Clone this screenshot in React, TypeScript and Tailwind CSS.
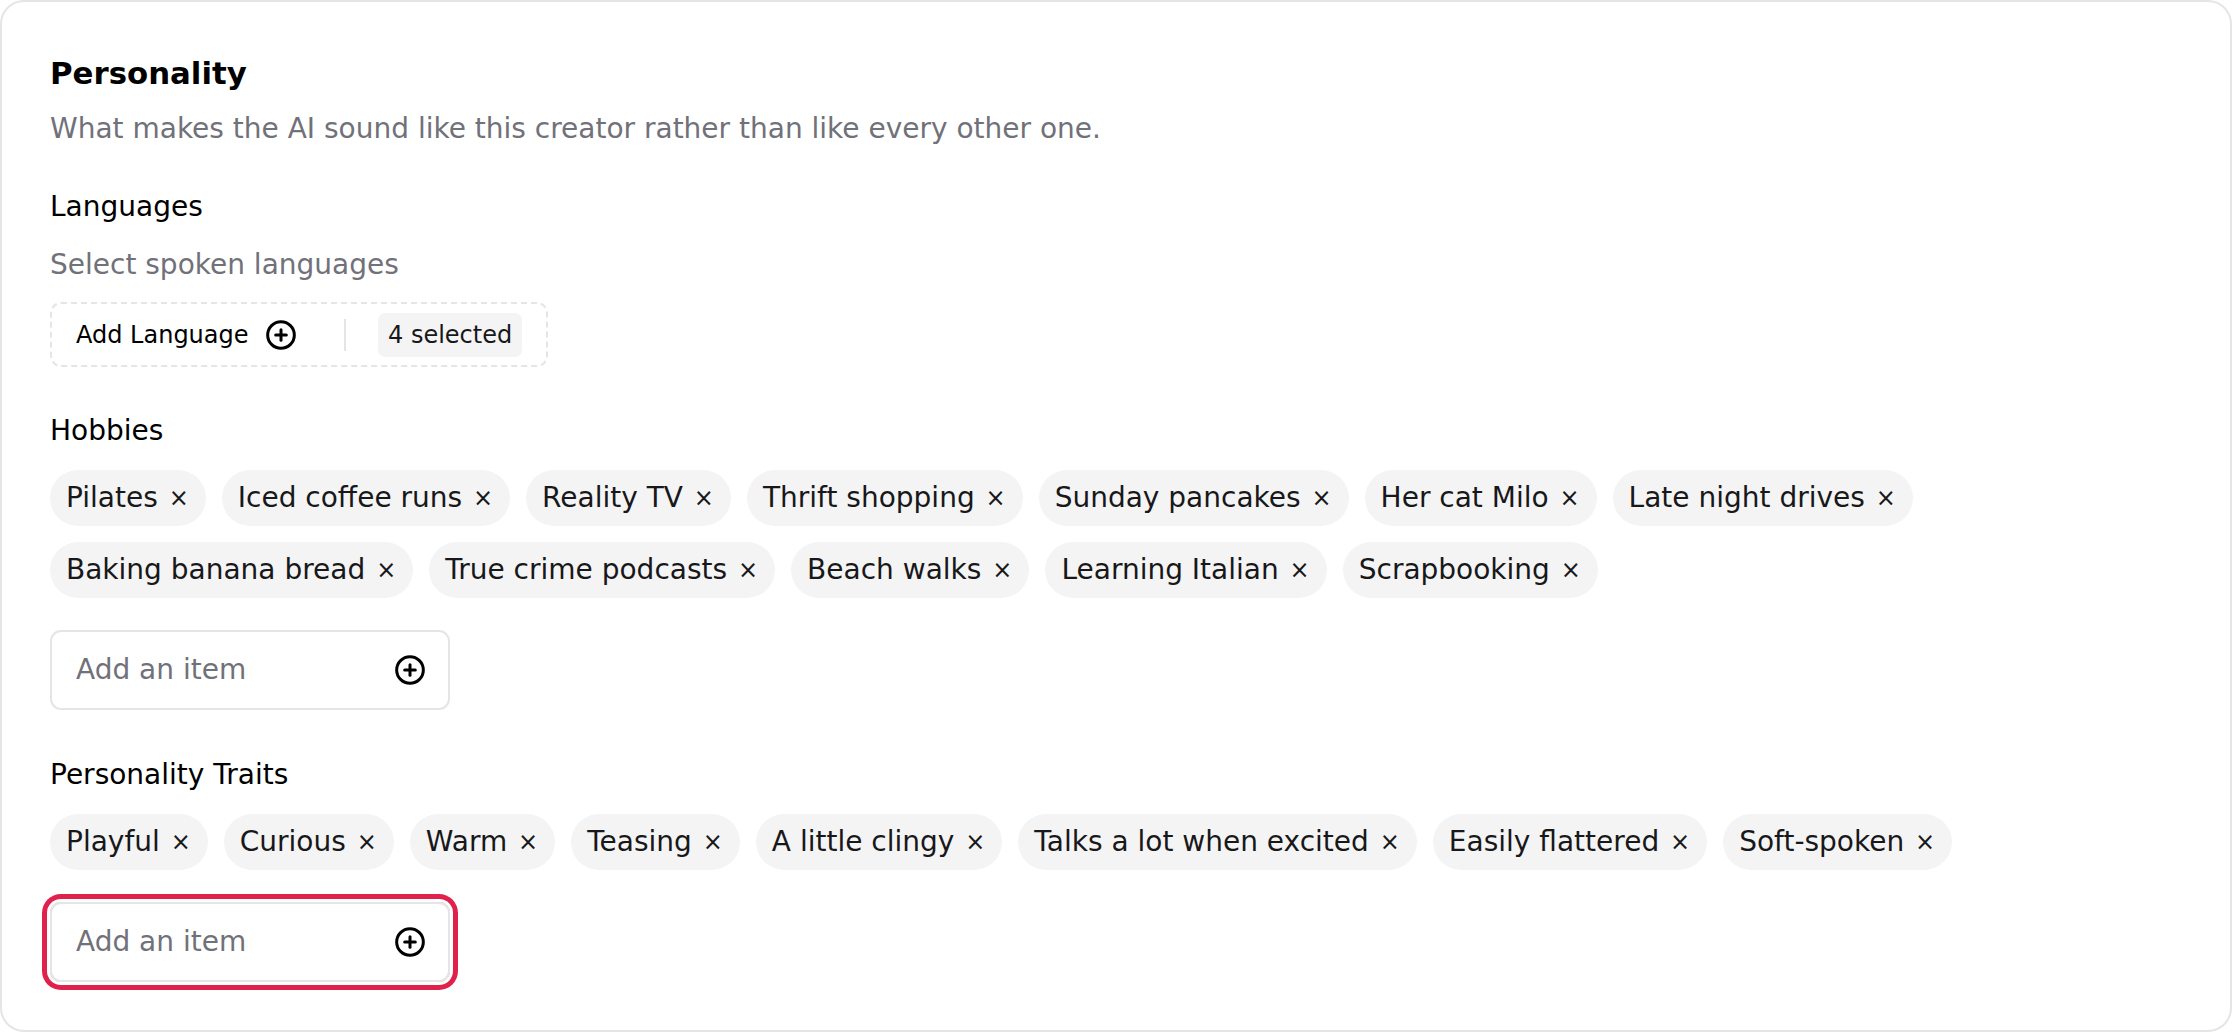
import { CirclePlus } from "lucide-react";

const hobbies = [
  "Pilates", "Iced coffee runs", "Reality TV", "Thrift shopping", "Sunday pancakes", "Her cat Milo", "Late night drives",
  "Baking banana bread", "True crime podcasts", "Beach walks", "Learning Italian", "Scrapbooking",
];

const traits = [
  "Playful", "Curious", "Warm", "Teasing", "A little clingy", "Talks a lot when excited", "Easily flattered", "Soft-spoken",
];

function Chip({ label }: { label: string }) {
  return (
    <div className="flex h-[56px] items-center gap-[10.9px] rounded-full bg-[#f4f4f4] pl-[16px] pr-[17px] text-[28px] leading-none text-[#18181b]">
      <span>{label}</span>
      <span className="text-[24px]">×</span>
    </div>
  );
}

function AddItem() {
  return (
    <div className="flex h-[80px] w-[400px] items-center justify-between rounded-[11px] border-2 border-[#e5e5e5] bg-white pl-[24px] pr-[22px]">
      <span className="text-[28px] leading-none text-[#71717a]">Add an item</span>
      <CirclePlus className="h-[32px] w-[32px] text-black" strokeWidth={2.25} />
    </div>
  );
}

export default function App() {
  return (
    <div className="h-[1032px] w-[2232px] bg-white font-['DejaVu_Sans',sans-serif]">
      <div className="flex h-full flex-col rounded-[24px] border-2 border-[#e5e5e5] pl-[48px] pt-[49px]">
        <h2 className="text-[30.8px] font-bold leading-[44px] text-black">Personality</h2>
        <p className="mt-[14px] text-[28px] leading-[40px] text-[#71717a]">What makes the AI sound like this creator rather than like every other one.</p>

        <div className="mt-[38px] text-[28px] leading-[40px] text-black">Languages</div>
        <div className="mt-[18px] text-[28px] leading-[40px] text-[#71717a]">Select spoken languages</div>
        <div className="mt-[17px] flex h-[65px] w-[498px] items-center rounded-[11px] border-2 border-dashed border-[#e5e5e5] pl-[24px] text-[24px] leading-none text-black">
          <span className="w-[173px]">Add Language</span>
          <CirclePlus className="ml-[16px] h-[32px] w-[32px]" strokeWidth={2.25} />
          <div className="ml-[47px] h-[32px] w-[2px] bg-[#e5e5e5]" />
          <div className="ml-[32px] flex h-[44px] items-center rounded-[7px] bg-[#f4f4f4] px-[10px] text-[#18181b]">4 selected</div>
        </div>

        <div className="mt-[44px] text-[28px] leading-[40px] text-black">Hobbies</div>
        <div className="mt-[19px] flex flex-wrap gap-x-[16px] gap-y-[16px]">
          {hobbies.map((h) => (
            <Chip key={h} label={h} />
          ))}
        </div>
        <div className="mt-[32px]">
          <AddItem />
        </div>

        <div className="mt-[45px] text-[28px] leading-[40px] text-black">Personality Traits</div>
        <div className="mt-[19px] flex flex-wrap gap-x-[16px] gap-y-[16px]">
          {traits.map((t) => (
            <Chip key={t} label={t} />
          ))}
        </div>
        <div className="mt-[32px]">
          <div className="w-fit rounded-[11px] shadow-[0_0_0_3px_#ffffff,0_0_0_8px_#e0214c]">
            <AddItem />
          </div>
        </div>
      </div>
    </div>
  );
}
